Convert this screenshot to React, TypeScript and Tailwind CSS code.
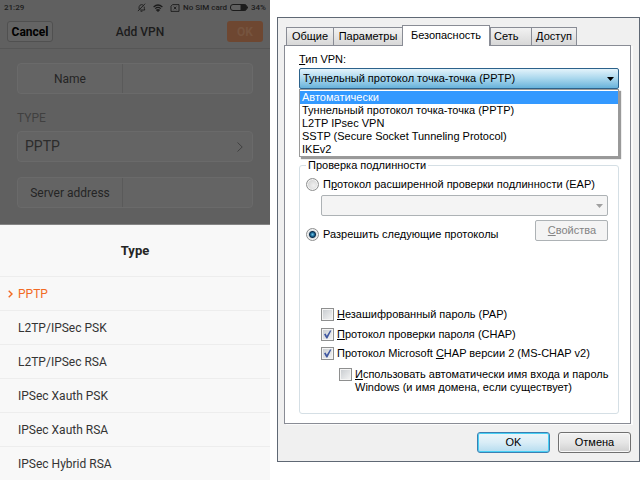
import { useState } from "react";
import type { ReactNode } from "react";

const PHONE_TYPES = [
  "PPTP",
  "L2TP/IPSec PSK",
  "L2TP/IPSec RSA",
  "IPSec Xauth PSK",
  "IPSec Xauth RSA",
  "IPSec Hybrid RSA",
];

const VPN_TYPES = [
  "Автоматически",
  "Туннельный протокол точка-точка (PPTP)",
  "L2TP IPsec VPN",
  "SSTP (Secure Socket Tunneling Protocol)",
  "IKEv2",
];

const TABS = [
  { label: "Общие", className: "w-[48px] text-center" },
  { label: "Параметры", className: "w-[70px] text-center" },
  { label: "Безопасность", className: "w-[88px] text-center" },
  { label: "Сеть", className: "w-[42px] pl-[3px] text-left" },
  { label: "Доступ", className: "w-[46px] text-center" },
];

const StatusBar = (): JSX.Element => (
  <div className="flex h-[15px] items-center justify-between px-1 text-[8px] font-medium text-[#1c1c1c]">
    <span>21:29</span>
    <div className="flex items-center gap-[3px]">
      <svg viewBox="0 0 10 10" className="mr-1 size-[9px]" fill="none" stroke="currentColor" strokeWidth="1">
        <path d="M2.5 7.2 C1.8 5 2.3 2 5 1.8 C6 1.8 6.8 2.2 7.2 2.8 M8 4 C8.2 5.5 8 6.5 8.6 7.8 H3.5 M4 9.2 H6 M9 .8 L1 9" />
      </svg>
      <svg viewBox="0 0 10 8" className="mr-1 h-2 w-[10px]" fill="none" stroke="currentColor" strokeWidth="1.2">
        <path d="M.6 3 Q5 -1 9.4 3 M2.2 4.6 Q5 2.2 7.8 4.6 M3.7 6 Q5 5 6.3 6 L5 7.2 Z" />
      </svg>
      <svg viewBox="0 0 10 8" className="h-2 w-[10px]" fill="none" stroke="currentColor" strokeWidth="0.9">
        <path d="M2.5 .6 H9 V7.4 H1 V2.2 Z M3.8 2.7 L6.3 5.3 M6.3 2.7 L3.8 5.3" />
      </svg>
      <span>No SIM card</span>
      <svg viewBox="0 0 18 7" className="h-[7px] w-[18px]" fill="none" stroke="currentColor">
        <rect x=".5" y=".5" width="16" height="6" rx="2.5" />
        <path d="M11 1 h5 v5 h-5 z M17.5 2.5 v2" fill="currentColor" />
      </svg>
      <span>34%</span>
    </div>
  </div>
);

const PhoneField = ({ id, label }: { id: string; label: string }): JSX.Element => (
  <div className="flex h-[31px] rounded border border-[#6a6a6a] bg-[#646464]">
    <label
      htmlFor={id}
      className="flex w-[105px] items-center justify-center border-r border-[#5a5a5a] text-[12px] text-[#252525]"
    >
      {label}
    </label>
    <input id={id} className="min-w-0 flex-1 bg-transparent px-2 text-[12px] outline-none" />
  </div>
);

const PhoneScreen = (): JSX.Element => {
  const [type, setType] = useState("PPTP");

  return (
    <section className="flex flex-col bg-[#606060] font-[Roboto,sans-serif]">
      <StatusBar />
      <header className="flex h-[34px] items-center justify-between border-b border-[#565656] px-[7px]">
        <button
          type="button"
          className="h-[21px] w-[46px] rounded-[3px] border border-[#505050] bg-[#646464] text-[12px] font-bold text-black"
        >
          Cancel
        </button>
        <h1 className="text-[12px] font-medium text-[#1c1c1c]">Add VPN</h1>
        <button
          type="button"
          className="h-[21px] w-[36px] rounded-[3px] bg-[#6e4731] text-[12px] font-bold text-[#76543f]"
        >
          OK
        </button>
      </header>
      <div className="flex flex-col px-[17px] pb-4 pt-[14px]">
        <PhoneField id="name" label="Name" />
        <h2 className="mt-4 text-[12px] leading-[16px] text-[#404040]">TYPE</h2>
        <button
          type="button"
          className="mb-[15px] mt-[5px] flex h-[31px] items-center justify-between rounded border border-[#6a6a6a] bg-[#646464] pl-[7px] pr-[9px] text-[14px] text-[#2c2c2c]"
        >
          PPTP
          <svg viewBox="0 0 6 10" className="h-[10px] w-[6px]" fill="none" stroke="#414141" strokeWidth="1">
            <path d="M.5 .5 L5.2 5 L.5 9.5" />
          </svg>
        </button>
        <PhoneField id="server" label="Server address" />
      </div>
      <div className="flex-1 border-t border-[#858585] bg-[#f8f8f8] text-[12px] text-[#343434]">
        <h2 className="flex h-[51px] items-center justify-center text-[13px] font-bold text-[#252525]">
          Type
        </h2>
        <ul>
          {PHONE_TYPES.map((name) => (
            <li key={name} className="border-t border-[#ededed]">
              <button
                type="button"
                onClick={(): void => setType(name)}
                className={`flex h-[33px] w-full items-center gap-[5px] pl-2 ${
                  name === type ? "text-[#f26a24]" : ""
                }`}
              >
                <svg viewBox="0 0 5 8" className="h-[8px] w-[5px]" fill="none" strokeWidth="1.4">
                  {name === type ? <path d="M.7 .7 L4 4 L.7 7.3" stroke="currentColor" /> : null}
                </svg>
                {name}
              </button>
            </li>
          ))}
        </ul>
      </div>
    </section>
  );
};

type CheckProps = {
  checked?: boolean;
  className?: string;
  children: ReactNode;
};

const Check = ({ checked = false, className = "", children }: CheckProps): JSX.Element => {
  const [on, setOn] = useState(checked);
  return (
    <label className={`flex items-start gap-[3px] whitespace-nowrap leading-[13px] ${className}`}>
      <span className="relative size-[13px] shrink-0">
        <input
          type="checkbox"
          checked={on}
          onChange={(event): void => setOn(event.target.checked)}
          className="block size-[13px] appearance-none border border-[#8e8f8f] bg-linear-to-br from-[#c6cace] to-[#f6f6f6] shadow-[inset_0_0_0_1px_#f4f4f4]"
        />
        {on ? (
          <svg viewBox="0 0 13 13" className="pointer-events-none absolute inset-0" fill="#3f57a0">
            <path d="M3 6.2 L4.6 5.6 L5.8 7.8 L9 2.4 L10.4 2.4 L6.4 10.4 L5.3 10.4 Z" />
          </svg>
        ) : null}
      </span>
      <span>{children}</span>
    </label>
  );
};

type RadioProps = {
  checked: boolean;
  onSelect: () => void;
  children: ReactNode;
};

const Radio = ({ checked, onSelect, children }: RadioProps): JSX.Element => (
  <label className="flex items-center gap-1 whitespace-nowrap leading-[13px]">
    <input
      type="radio"
      name="auth"
      checked={checked}
      onChange={onSelect}
      className="size-[13px] shrink-0 appearance-none rounded-full border border-[#8e8f8f] bg-[radial-gradient(circle_at_60%_60%,#f0f0f0,#c8c8c8)] shadow-[inset_0_0_0_1px_#f4f4f4] checked:bg-[radial-gradient(circle_at_50%_50%,#6fc8ea_0,#17618f_2px,#0c2f4c_3px,#d8dcdf_4px)]"
    />
    <span>{children}</span>
  </label>
);

const SecurityPanel = (): JSX.Element => {
  const [auth, setAuth] = useState("protocols");
  const [vpnType, setVpnType] = useState(VPN_TYPES[1]);
  const [active, setActive] = useState(VPN_TYPES[0]);

  return (
    <div className="border border-[#898c95] bg-white pb-[9px] pl-[14px] pr-[11px] pt-[6px] shadow-[2px_1px_0_#fbfbfb]">
      <label htmlFor="vpn-type" className="block leading-[14px]">
        <u>Т</u>ип VPN:
      </label>
      <div className="relative mt-[2px]">
        <select
          id="vpn-type"
          value={vpnType}
          onChange={(event): void => setVpnType(event.target.value)}
          className="block h-[21px] w-full appearance-none rounded-[2px] border border-[#2c628b] bg-linear-to-b from-[#e3f3fb] via-[#a9d7ed] to-[#68b3db] pl-[3px]"
        >
          {VPN_TYPES.map((name) => (
            <option key={name}>{name}</option>
          ))}
        </select>
        <svg viewBox="0 0 7 4" className="pointer-events-none absolute right-[5px] top-[9px] h-1 w-[7px]">
          <path d="M0 0 H7 L3.5 4 Z" />
        </svg>
        <ul
          role="listbox"
          aria-label="Тип VPN"
          className="absolute inset-x-0 top-full z-10 border border-[#9a9a9a] bg-white pt-px leading-[13px] shadow-[2px_2px_1px_#999]"
        >
          {VPN_TYPES.map((name) => (
            <li
              key={name}
              role="option"
              aria-selected={name === active}
              onMouseEnter={(): void => setActive(name)}
              className={`pl-[2px] ${name === active ? "bg-[#3399ff] text-white" : ""}`}
            >
              {name}
            </li>
          ))}
        </ul>
      </div>
      <fieldset className="mt-[70px] rounded-[3px] border border-[#d5dfe5] pb-[19px] pl-[6px] pr-[10px]">
        <legend className="px-[2px] leading-[13px]">Проверка подлинности</legend>
        <div className="mt-[6px]">
          <Radio checked={auth === "eap"} onSelect={(): void => setAuth("eap")}>
            П<u>р</u>отокол расширенной проверки подлинности (EAP)
          </Radio>
        </div>
        <div className="relative ml-[15px] mt-1">
          <select
            disabled
            aria-label="Протокол EAP"
            className="block h-[21px] w-full appearance-none rounded-[2px] border border-[#adb2b5] bg-[#f4f4f4] opacity-100"
          />
          <svg viewBox="0 0 7 4" className="pointer-events-none absolute right-[5px] top-[9px] h-1 w-[7px]" fill="#a0a0a0">
            <path d="M0 0 H7 L3.5 4 Z" />
          </svg>
        </div>
        <div className="mt-1 flex items-start justify-between">
          <div className="pt-[8px]">
            <Radio checked={auth === "protocols"} onSelect={(): void => setAuth("protocols")}>
              Разрешить сле<u>д</u>ующие протоколы
            </Radio>
          </div>
          <button
            type="button"
            disabled
            className="h-[21px] w-[73px] rounded-[2px] border border-[#adb2b5] bg-[#f4f4f4] text-[#838383]"
          >
            <u>С</u>войства
          </button>
        </div>
        <div className="ml-[15px] mt-[67px] flex flex-col">
          <Check>
            <u>Н</u>езашифрованный пароль (PAP)
          </Check>
          <Check checked className="mt-[7px]">
            <u>П</u>ротокол проверки пароля (CHAP)
          </Check>
          <Check checked className="mt-[6px]">
            Протокол Microsoft <u>C</u>HAP версии 2 (MS-CHAP v2)
          </Check>
          <Check className="ml-[18px] mt-2">
            <u>И</u>спользовать автоматически имя входа и пароль
            <br />
            Windows (и имя домена, если существует)
          </Check>
        </div>
      </fieldset>
    </div>
  );
};

const PropertiesDialog = (): JSX.Element => (
  <section className="mt-[17px] border border-[#5f6874] bg-[#f0f0f0] pb-2 pl-[6px] pr-2 pt-[7px] font-['Liberation_Sans',Arial,sans-serif] text-[11px] text-black">
    <div role="tablist" className="flex items-end pl-[2px]">
      {TABS.map(({ label, className }) => {
        const selected = label === "Безопасность";
        return (
          <button
            key={label}
            type="button"
            role="tab"
            aria-selected={selected}
            className={`border border-b-0 border-[#898c95] ${className} ${
              selected
                ? "z-10 -mb-px h-[21px] bg-white pb-[2px]"
                : "-mr-px h-[18px] bg-linear-to-b from-[#f2f2f2] to-[#d8d8d8]"
            }`}
          >
            {label}
          </button>
        );
      })}
    </div>
    <SecurityPanel />
    <footer className="mt-2 flex justify-end gap-2">
      <button
        type="button"
        className="h-[21px] w-[73px] rounded-[3px] border border-[#3c7fb1] bg-linear-to-b from-[#eef6fa] via-[#d9edf7] to-[#b5dcef] shadow-[inset_0_0_0_1px_#48d0f5]"
      >
        OK
      </button>
      <button
        type="button"
        className="h-[21px] w-[73px] rounded-[3px] border border-[#707070] bg-linear-to-b from-[#f2f2f2] via-[#e6e6e6] to-[#cfcfcf] shadow-[inset_0_0_0_1px_#f8f8f8]"
      >
        Отмена
      </button>
    </footer>
  </section>
);

const App = (): JSX.Element => (
  <main className="grid min-h-screen grid-cols-[minmax(0,27fr)_minmax(0,37fr)] bg-white">
    <PhoneScreen />
    <div className="pl-[7px]">
      <PropertiesDialog />
    </div>
  </main>
);

export default App;
